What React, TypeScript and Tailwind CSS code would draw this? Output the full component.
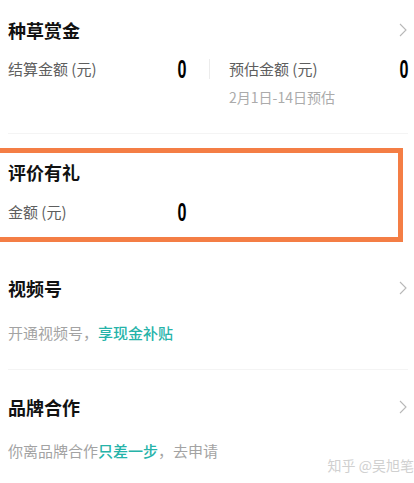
import React from "react";

function Chevron() {
  return (
    <svg width="8" height="14" viewBox="0 0 8 14" fill="none" className="mr-[1px]">
      <path d="M1 1l6 6-6 6" stroke="#b8b8b8" strokeWidth="1.1" />
    </svg>
  );
}

function Zero() {
  return (
    <span className="inline-block origin-right scale-x-[0.62] font-['Liberation_Sans',sans-serif] text-[26px] leading-[20px] font-bold text-black">
      0
    </span>
  );
}

export default function App() {
  return (
    <div className="relative w-[414px] h-[483px] overflow-hidden bg-white font-['Noto_Sans_CJK_SC','Noto_Sans',sans-serif]">
      {/* 种草赏金 */}
      <section className="pl-[8px] pr-[6px] pt-[19px]">
        <div className="flex h-[22px] items-center justify-between">
          <h2 className="text-[18px] leading-[22px] font-semibold text-[#111]">种草赏金</h2>
          <Chevron />
        </div>
        <div className="mt-[18px] flex">
          <div className="flex h-[20px] w-[178px] items-center justify-between">
            <span className="text-[15px] leading-[20px] text-[#5e5e5e]">结算金额 (元)</span>
            <Zero />
          </div>
          <div className="ml-[23px] mr-[19px] h-[20px] w-px bg-[#ececec]" />
          <div className="flex flex-1 flex-col">
            <div className="flex h-[20px] items-center justify-between">
              <span className="text-[15px] leading-[20px] text-[#5e5e5e]">预估金额 (元)</span>
              <Zero />
            </div>
            <span className="mt-[9px] text-[14px] leading-[18px] text-[#ababab]">2月1日-14日预估</span>
          </div>
        </div>
        <div className="mt-[27px] h-px bg-[#f4f4f4]" />
      </section>

      {/* 评价有礼 */}
      <section className="-ml-[6px] mr-[11px] mt-[14px] border-[5px] border-[#f47e45] pl-[9px] pt-[8px] pb-[15px]">
        <h2 className="text-[18px] leading-[22px] font-semibold text-[#111]">评价有礼</h2>
        <div className="mt-[19px] flex h-[20px] w-[178px] items-center justify-between">
          <span className="text-[15px] leading-[20px] text-[#5e5e5e]">金额 (元)</span>
          <Zero />
        </div>
      </section>

      {/* 视频号 */}
      <section className="pl-[8px] pr-[6px] pt-[35px]">
        <div className="flex h-[22px] items-center justify-between">
          <h2 className="text-[18px] leading-[22px] font-semibold text-[#111]">视频号</h2>
          <Chevron />
        </div>
        <p className="mt-[24px] text-[15px] leading-[20px] text-[#a3a3a3]">
          开通视频号，<span className="font-medium text-[#26b3a9]">享现金补贴</span>
        </p>
        <div className="mt-[26px] h-px bg-[#f4f4f4]" />
      </section>

      {/* 品牌合作 */}
      <section className="pl-[8px] pr-[6px] pt-[26px]">
        <div className="flex h-[22px] items-center justify-between">
          <h2 className="text-[18px] leading-[22px] font-semibold text-[#111]">品牌合作</h2>
          <Chevron />
        </div>
        <p className="mt-[23px] text-[15px] leading-[20px] text-[#a3a3a3]">
          你离品牌合作<span className="font-medium text-[#26b3a9]">只差一步</span>，去申请
        </p>
      </section>

      <span className="absolute right-0 top-[456px] text-[14px] leading-[18px] text-[#d0d0d0]">知乎 @吴旭笔</span>
    </div>
  );
}
